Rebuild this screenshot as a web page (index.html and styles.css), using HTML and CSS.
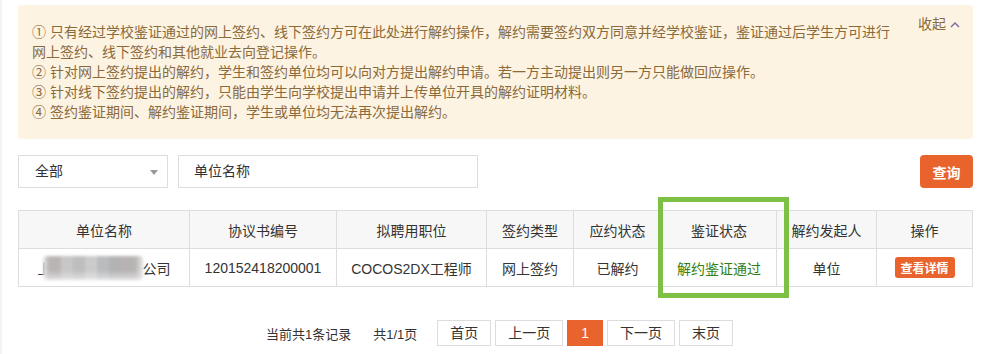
FILE: index.html
```html
<!DOCTYPE html>
<html lang="zh-CN">

<head>
    <meta charset="UTF-8">
    <meta name="viewport" content="width=device-width, initial-scale=1.0">
    <title>解约管理</title>
    <link rel="stylesheet" href="styles.css">
</head>

<body>
    <div class="page">
        <div class="sideEdge"></div>
        <div class="main">
            <!-- 提示说明 -->
            <div class="notice">
                <a href="#" class="foldLink">收起
                    <svg width="10" height="7" viewBox="0 0 10 7"><path d="M1 6 L5 2 L9 6" fill="none" stroke="currentColor" stroke-width="1.4"/></svg>
                </a>
                <p>① 只有经过学校鉴证通过的网上签约、线下签约方可在此处进行解约操作，解约需要签约双方同意并经学校鉴证，鉴证通过后学生方可进行网上签约、线下签约和其他就业去向登记操作。</p>
                <p>② 针对网上签约提出的解约，学生和签约单位均可以向对方提出解约申请。若一方主动提出则另一方只能做回应操作。</p>
                <p>③ 针对线下签约提出的解约，只能由学生向学校提出申请并上传单位开具的解约证明材料。</p>
                <p>④ 签约鉴证期间、解约鉴证期间，学生或单位均无法再次提出解约。</p>
            </div>

            <!-- 查询条件 -->
            <div class="filterBar">
                <div class="selectBox">全部<span class="caret"></span></div>
                <div class="textBox">单位名称</div>
                <button class="queryButton">查询</button>
            </div>

            <!-- 列表 -->
            <div class="tableWrap">
                <table class="listTable">
                    <colgroup>
                        <col style="width: 171px">
                        <col style="width: 147px">
                        <col style="width: 150px">
                        <col style="width: 87px">
                        <col style="width: 88px">
                        <col style="width: 115px">
                        <col style="width: 100px">
                        <col style="width: 96px">
                    </colgroup>
                    <thead>
                        <tr>
                            <th>单位名称</th>
                            <th>协议书编号</th>
                            <th>拟聘用职位</th>
                            <th>签约类型</th>
                            <th>应约状态</th>
                            <th>鉴证状态</th>
                            <th>解约发起人</th>
                            <th>操作</th>
                        </tr>
                    </thead>
                    <tbody>
                        <tr>
                            <td><span class="companyName">上<span class="blurName"></span>公司</span></td>
                            <td>120152418200001</td>
                            <td>COCOS2DX工程师</td>
                            <td>网上签约</td>
                            <td>已解约</td>
                            <td class="statusPass">解约鉴证通过</td>
                            <td>单位</td>
                            <td><button class="detailButton">查看详情</button></td>
                        </tr>
                    </tbody>
                </table>
                <div class="highlightBox"></div>
            </div>

            <!-- 分页 -->
            <div class="pager">
                <span class="pagerInfo">当前共1条记录</span>
                <span class="pagerInfo pagerTotal">共1/1页</span>
                <a href="#" class="pageButton">首页</a>
                <a href="#" class="pageButton">上一页</a>
                <a href="#" class="pageButton current">1</a>
                <a href="#" class="pageButton">下一页</a>
                <a href="#" class="pageButton">末页</a>
            </div>
        </div>
    </div>
</body>

</html>
```

FILE: styles.css
```css
body {
    margin: 0;
    background: #fff;
    font-family: "Liberation Sans", "Noto Sans CJK SC", sans-serif;
    color: #333;
}

.page {
    display: flex;
    height: 354px;
    overflow: hidden;
}

.sideEdge {
    width: 3px;
    background: #f4f3f1;
}

.main {
    flex: 1;
    padding: 5px 16px 0 16px;
}

/* notice */
.notice {
    position: relative;
    background: #fdf3e3;
    border-radius: 4px;
    padding: 17px 78px 17px 14px;
    color: #8a6a3a;
    font-size: 14px;
    line-height: 20px;
}

.notice p {
    margin: 0;
}

.foldLink {
    position: absolute;
    top: 9px;
    right: 13px;
    color: #8a6a3a;
    text-decoration: none;
    font-size: 14px;
    display: flex;
    align-items: center;
    gap: 4px;
}

.foldLink svg {
    color: #7c68a2;
}

/* filter */
.filterBar {
    display: flex;
    align-items: center;
    margin-top: 16px;
    height: 33px;
}

.selectBox,
.textBox {
    height: 33px;
    box-sizing: border-box;
    border: 1px solid #ddd;
    font-size: 14px;
    line-height: 31px;
    color: #333;
}

.selectBox {
    position: relative;
    width: 150px;
    padding-left: 16px;
}

.caret {
    position: absolute;
    right: 9px;
    top: 14px;
    border-left: 4px solid transparent;
    border-right: 4px solid transparent;
    border-top: 5px solid #999;
}

.textBox {
    width: 300px;
    margin-left: 10px;
    padding-left: 15px;
}

.queryButton {
    margin-left: auto;
    width: 53px;
    height: 33px;
    background: #e9642c;
    color: #fff;
    border: none;
    border-radius: 4px;
    font-family: inherit;
    font-size: 14px;
    font-weight: bold;
    cursor: pointer;
}

/* table */
.tableWrap {
    position: relative;
    margin-top: 22px;
}

.listTable {
    width: 954px;
    table-layout: fixed;
    border-collapse: collapse;
    font-size: 14px;
}

.listTable th,
.listTable td {
    border: 1px solid #ddd;
    text-align: center;
    padding: 0;
    color: #333;
}

.listTable th {
    height: 37px;
    background: #f7f7f7;
    font-weight: normal;
}

.listTable td {
    height: 37px;
}

.listTable td.statusPass {
    color: #2f7f14;
}

.companyName {
    display: inline-flex;
    align-items: center;
}

.blurName {
    display: inline-block;
    width: 100px;
    height: 24px;
    margin-left: -9px;
    border-radius: 4px;
    background:
        linear-gradient(to bottom, rgba(255, 255, 255, 0) 60%, rgba(240, 240, 240, 0.7) 100%),
        linear-gradient(to right, #eceaea 0, #b9b5b5 6%, #b9b5b5 18%, #c8c6c6 18%, #c8c6c6 30%, #bebebe 30%, #bebebe 42%, #cbcbcb 42%, #cbcbcb 54%, #b9bdc0 54%, #b9bdc0 66%, #b3b3b3 66%, #b3b3b3 78%, #b8b3b3 78%, #b8b3b3 92%, #e4e4e4 100%);
    filter: blur(1.5px);
}

.detailButton {
    width: 60px;
    height: 21px;
    background: #e9642c;
    color: #fff;
    border: none;
    border-radius: 3px;
    font-family: inherit;
    font-size: 12px;
    font-weight: bold;
    padding: 0;
    cursor: pointer;
}

.highlightBox {
    position: absolute;
    left: 640px;
    top: -13px;
    width: 131px;
    height: 101px;
    box-sizing: border-box;
    border: 5px solid #7cc143;
}

/* pager */
.pager {
    display: flex;
    justify-content: center;
    align-items: center;
    gap: 4px;
    margin-top: 33px;
    padding-left: 8px;
    font-size: 13px;
}

.pagerInfo {
    color: #333;
}

.pagerTotal {
    margin-left: 18px;
    margin-right: 16px;
}

.pageButton {
    height: 26px;
    box-sizing: border-box;
    border: 1px solid #ddd;
    padding: 0 12px;
    line-height: 24px;
    font-size: 14px;
    color: #333;
    text-decoration: none;
}

.pageButton.current {
    background: #e9642c;
    border-color: #e9642c;
    color: #fff;
    padding: 0 13px;
}
```
